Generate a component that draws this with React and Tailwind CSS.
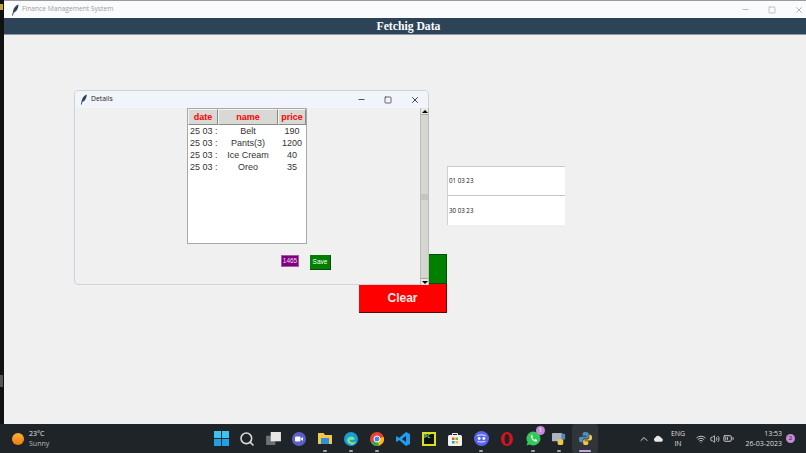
import React from 'react';
import { ChevronUp, Wifi, Volume2, BatteryMedium, Minus, Square, X, Search } from 'lucide-react';

const Feather = ({ className }) => (
  <svg viewBox="0 0 10 14" className={className}>
    <path d="M8.5 0.5C5 1.5 2.5 5 2 9L1 13.5L2 13.6L3 10C6 9 8.5 5 8.5 0.5Z" fill="#2c4258" />
  </svg>
);

const Win = () => (
  <svg viewBox="0 0 16 16" className="w-[15px] h-[15px]">
    <rect x="0" y="0" width="7.5" height="7.5" fill="#3fc1f2" />
    <rect x="8.5" y="0" width="7.5" height="7.5" fill="#3fc1f2" />
    <rect x="0" y="8.5" width="7.5" height="7.5" fill="#1f9fe6" />
    <rect x="8.5" y="8.5" width="7.5" height="7.5" fill="#1f9fe6" />
  </svg>
);

const TaskIcon = ({ children, dot, active }) => (
  <div className={`relative w-[26px] h-[29px] flex items-center justify-center ${active ? 'bg-[#30353a] rounded-[3px]' : ''}`}>
    {children}
    {dot && <span className="absolute bottom-[1px] left-[11px] w-[4px] h-[2px] bg-[#a0a4a8] rounded-full" />}
    {active && <span className="absolute bottom-[1px] left-[7px] w-[12px] h-[2px] bg-[#c9a5e8] rounded-full" />}
  </div>
);

const Row = ({ name, price }) => (
  <div className="flex h-[12px] items-center text-[9px] leading-[12px] text-[#333]">
    <span className="w-[30px] pl-[2px] whitespace-nowrap">25 03 :</span>
    <span className="w-[60px] text-center whitespace-nowrap">{name}</span>
    <span className="w-[28px] text-center">{price}</span>
  </div>
);

const HeadCell = ({ w, children }) => (
  <div className={`${w} h-[16px] pt-[1px] flex items-center justify-center bg-[#d8d8d4] border border-[#f4f4f0] border-r-[#8a8a86] border-b-[#8a8a86] text-[9px] font-bold text-[#ff0000]`}>
    {children}
  </div>
);

export default function App() {
  return (
    <div className="relative w-[806px] h-[453px] overflow-hidden bg-[#111] flex flex-col font-['Liberation_Sans',sans-serif]">
      <span className="absolute left-0 top-[4px] w-[3px] h-[6px] bg-[#c9a030]" />
      <span className="absolute left-0 top-[375px] w-[3px] h-[12px] bg-[#555]" />
      <div className="flex-1 min-h-0 ml-[4px] flex flex-col bg-[#f0f0f0]">
        {/* main window title */}
        <div className="h-[18px] bg-[#fafbfc] flex items-center border-t border-[#9a9a9a]">
          <Feather className="w-[9px] h-[12px] ml-[7px]" />
          <span className="ml-[2px] text-[6.7px] text-[#9c9c9c] font-['Open_Sans',sans-serif]">Finance Management System</span>
          <div className="ml-auto flex items-center gap-[18px] mr-[2px] text-[#a8a8a8]">
            <Minus size={9} />
            <Square size={8} />
            <X size={10} />
          </div>
        </div>
        <div className="h-[17px] pt-[1px] bg-[#2c4358] flex items-center justify-center border-b border-[#8d9aa5]">
          <span className="ml-[7px] text-[11.7px] font-bold text-white font-['Liberation_Serif',serif]">Fetchig Data</span>
        </div>

        <div className="relative flex-1">
          {/* date entries */}
          <div className="absolute left-[443px] top-[131px] w-[118px] h-[59px] bg-white border-t border-[#c8c8c8] flex flex-col">
            <div className="h-[29px] flex items-center pl-[1px] border-b border-[#c4c4c4] border-l border-l-[#d0d0d0] text-[6.2px] text-[#111] font-['Open_Sans',sans-serif]">01 03 23</div>
            <div className="h-[29px] flex items-center pl-[1px] border-l border-l-[#d0d0d0] text-[6.2px] text-[#111] font-['Open_Sans',sans-serif]">30 03 23</div>
          </div>

          <div className="absolute left-[424px] top-[219px] w-[19px] h-[30px] bg-[#008000] border border-[#0a4a0a] border-l-0" />
          <div className="absolute left-[355px] top-[249px] w-[88px] h-[29px] bg-[#ff0000] border-b border-r border-[#5a0a0a] flex items-center justify-center text-[12px] font-bold text-[#ffe8e8]">Clear</div>

          {/* details window */}
          <div className="absolute left-[70px] top-[55px] w-[355px] h-[195px] bg-[#f0f0f0] border border-[#cfd3d8] rounded-[4px] flex flex-col">
            <div className="h-[17px] bg-[#f1f4fb] rounded-t-[4px] flex items-center">
              <Feather className="w-[8px] h-[11px] ml-[5px]" />
              <span className="ml-[3px] text-[6.8px] text-[#222] font-['Open_Sans',sans-serif]">Details</span>
              <div className="ml-auto flex items-center gap-[18px] mr-[8px] text-[#222]">
                <Minus size={9} />
                <Square size={8} />
                <X size={10} />
              </div>
            </div>
            <div className="relative flex-1">
              <div className="absolute left-[112px] top-[0px] w-[120px] h-[136px] bg-white border border-[#a8a8a8]">
                <div className="flex">
                  <HeadCell w="w-[30px]">date</HeadCell>
                  <HeadCell w="w-[60px]">name</HeadCell>
                  <HeadCell w="w-[28px]">price</HeadCell>
                </div>
                <Row name="Belt" price="190" />
                <Row name="Pants(3)" price="1200" />
                <Row name="Ice Cream" price="40" />
                <Row name="Oreo" price="35" />
              </div>
              <div className="absolute left-[206px] top-[147px] w-[18px] h-[12px] bg-[#800080] border border-[#a060a0] flex items-center justify-center text-[6.5px] text-[#eedcee]">1465</div>
              <div className="absolute left-[235px] top-[147px] w-[21px] h-[15px] bg-[#008000] border-b border-r border-[#0a4a0a] flex items-center justify-center text-[6.5px] text-white">Save</div>

              {/* scrollbar */}
              <div className="absolute left-[345px] top-[0px] w-[9px] h-[177px] bg-[#d6d6d0] border-x border-[#bdbdb8] flex flex-col items-center justify-between">
                <div className="w-[7px] h-[7px] bg-[#e8e8e8] border-b border-[#a8a8a4] flex items-center justify-center">
                  <span className="w-0 h-0 border-x-[3px] border-x-transparent border-b-[3px] border-b-black" />
                </div>
                <div className="w-[7px] h-[6px] bg-[#c4c4c0]" />
                <div className="w-[7px] h-[7px] bg-[#e8e8e8] border-t border-[#a8a8a4] flex items-center justify-center">
                  <span className="w-0 h-0 border-x-[3px] border-x-transparent border-t-[3px] border-t-black" />
                </div>
              </div>
            </div>
          </div>
        </div>
      </div>

      {/* taskbar */}
      <div className="h-[29px] shrink-0 bg-[#1f2428] relative flex items-center text-[#e4e4e4] font-['Open_Sans',sans-serif]">
        <div className="ml-[12px] w-[12px] h-[12px] rounded-full bg-gradient-to-b from-[#fbb034] to-[#f07a10]" />
        <div className="ml-[5px] flex flex-col text-[7px] leading-[10px]">
          <span>23°C</span>
          <span className="text-[#b8b8b8]">Sunny</span>
        </div>

        <div className="absolute left-[208px] top-0 flex items-center">
          <TaskIcon><Win /></TaskIcon>
          <TaskIcon><Search size={16} color="#d8d8d8" strokeWidth={2.4} /></TaskIcon>
          <TaskIcon>
            <svg viewBox="0 0 16 14" className="w-[15px] h-[13px]">
              <rect x="0" y="4" width="10" height="10" fill="#6d7073" />
              <rect x="5" y="0" width="11" height="10" fill="#e6e6e6" />
            </svg>
          </TaskIcon>
          <TaskIcon>
            <svg viewBox="0 0 14 14" className="w-[14px] h-[14px]">
              <circle cx="7" cy="7" r="7" fill="#5b5fc7" />
              <rect x="3" y="4.5" width="5.5" height="5" rx="1" fill="#fff" />
              <path d="M9 6.5L11 5V9L9 7.5Z" fill="#fff" />
            </svg>
          </TaskIcon>
          <TaskIcon dot>
            <svg viewBox="0 0 14 13" className="w-[14px] h-[13px]">
              <path d="M0 1H5.5L7 3H14V12H0Z" fill="#f5c84a" />
              <rect x="3" y="6" width="8" height="6" fill="#2f8fd8" />
            </svg>
          </TaskIcon>
          <TaskIcon dot>
            <svg viewBox="0 0 14 14" className="w-[14px] h-[14px]">
              <circle cx="7" cy="7" r="7" fill="#1b9bd8" />
              <path d="M3 9C3 5 7 3.5 10 5.5C11 6.5 11 8 9 8H5.5C6 10.5 9.5 11 12 9.5C11 13 6 14.5 3 9Z" fill="#7fe08a" />
            </svg>
          </TaskIcon>
          <TaskIcon dot>
            <svg viewBox="0 0 14 14" className="w-[14px] h-[14px]">
              <circle cx="7" cy="7" r="7" fill="#ea4335" />
              <path d="M7 7L1 10.5A7 7 0 0 0 9 13.7Z" fill="#34a853" />
              <path d="M7 7L13.7 5A7 7 0 0 1 9 13.7Z" fill="#fbbc05" />
              <circle cx="7" cy="7" r="3" fill="#4285f4" stroke="#fff" />
            </svg>
          </TaskIcon>
          <TaskIcon>
            <svg viewBox="0 0 14 14" className="w-[14px] h-[14px]">
              <path d="M10 0L14 2V12L10 14L3 8L1 10L0 9V5L1 4L3 6ZM10 4L6 7L10 10Z" fill="#1f9cf0" />
            </svg>
          </TaskIcon>
          <TaskIcon>
            <div className="w-[14px] h-[14px] bg-[#d8e020] p-[2px]">
              <div className="w-full h-full bg-[#111] text-[5px] leading-[5px] font-bold text-[#7fe08a]">PC</div>
            </div>
          </TaskIcon>
          <TaskIcon>
            <svg viewBox="0 0 14 14" className="w-[14px] h-[14px]">
              <rect x="0" y="3" width="14" height="11" rx="1.5" fill="#f2f2f2" />
              <path d="M4.5 3V1.5H9.5V3" stroke="#f2f2f2" fill="none" />
              <rect x="4" y="5.5" width="2.5" height="2.5" fill="#f25022" />
              <rect x="7.5" y="5.5" width="2.5" height="2.5" fill="#7fba00" />
              <rect x="4" y="9" width="2.5" height="2.5" fill="#00a4ef" />
              <rect x="7.5" y="9" width="2.5" height="2.5" fill="#ffb900" />
            </svg>
          </TaskIcon>
          <TaskIcon dot>
            <svg viewBox="0 0 16 16" className="w-[15px] h-[15px]">
              <circle cx="8" cy="8" r="8" fill="#5865f2" />
              <circle cx="5.5" cy="8" r="1.5" fill="#fff" />
              <circle cx="10.5" cy="8" r="1.5" fill="#fff" />
              <path d="M3.5 5C6 3.8 10 3.8 12.5 5" stroke="#fff" fill="none" />
              <path d="M4 11C6.5 12 9.5 12 12 11" stroke="#fff" fill="none" />
            </svg>
          </TaskIcon>
          <TaskIcon>
            <svg viewBox="0 0 14 14" className="w-[14px] h-[14px]">
              <ellipse cx="7" cy="7" rx="6" ry="7" fill="#d9121f" />
              <ellipse cx="7" cy="7" rx="2.5" ry="5" fill="#1f2428" />
            </svg>
          </TaskIcon>
          <TaskIcon dot>
            <svg viewBox="0 0 14 14" className="w-[15px] h-[15px]">
              <path d="M7 0.5A6.5 6.5 0 1 1 3.5 12.5L0.5 13.5L1.5 10.5A6.5 6.5 0 0 1 7 0.5Z" fill="#34c759" />
              <path d="M4.5 4C4.5 7.5 6.5 9.5 10 10L10.5 8.5L8.5 7.5L8 8.3C7 8 6 7 5.7 6L6.5 5.5L5.5 3.5Z" fill="#fff" />
            </svg>
            <span className="absolute top-[2px] right-[1px] w-[9px] h-[9px] rounded-full bg-[#c58ad8] text-[6px] leading-[9px] text-center text-white">1</span>
          </TaskIcon>
          <TaskIcon dot>
            <svg viewBox="0 0 16 16" className="w-[15px] h-[15px]">
              <rect x="0" y="2" width="11" height="9" rx="1" fill="#aab4c0" />
              <path d="M10 3H14V9H10Z" fill="#5a86b8" />
              <path d="M6 9H12V13A2 2 0 0 1 10 15H8A2 2 0 0 1 6 13Z" fill="#f2c744" />
            </svg>
          </TaskIcon>
          <TaskIcon active>
            <svg viewBox="0 0 16 16" className="w-[15px] h-[15px]">
              <path d="M8 1C5 1 5 2 5 4V5H9V6H3C1 6 1 8 1 9C1 11 2 12 3 12H5V10C5 8.5 6 8 7 8H10C11 8 11.5 7.5 11.5 6.5V3C11.5 2 10 1 8 1Z" fill="#4f8fc0" />
              <path d="M8 15C11 15 11 14 11 12V11H7V10H13C15 10 15 8 15 7C15 5 14 4 13 4H12V6.5C12 8 11 9 10 9H7C6 9 5.5 9.5 5.5 10.5V13C5.5 14 6 15 8 15Z" fill="#f2c744" />
            </svg>
          </TaskIcon>
        </div>

        <div className="ml-auto flex items-center text-[#dedede]">
          <ChevronUp size={12} />
          <svg viewBox="0 0 12 8" className="w-[10px] h-[7px] ml-[3px]">
            <path d="M3 8A3 3 0 0 1 3 2.5A4 4 0 0 1 10 3.5A2.3 2.3 0 0 1 10 8Z" fill="#e8e8e8" />
          </svg>
          <div className="w-[22px] ml-[4px] flex flex-col items-center text-[7px] leading-[10px]">
            <span>ENG</span>
            <span>IN</span>
          </div>
          <Wifi size={10} className="ml-[7px]" />
          <Volume2 size={10} className="ml-[4px]" />
          <BatteryMedium size={11} className="ml-[3px]" />
          <div className="w-[42px] ml-[6px] flex flex-col items-end text-[7px] leading-[10px]">
            <span>13:53</span>
            <span>26-03-2023</span>
          </div>
          <span className="ml-[4px] mr-[11px] w-[9px] h-[9px] rounded-full bg-[#c58ad8] text-[6px] leading-[9px] text-center text-[#222]">2</span>
        </div>
      </div>
    </div>
  );
}
